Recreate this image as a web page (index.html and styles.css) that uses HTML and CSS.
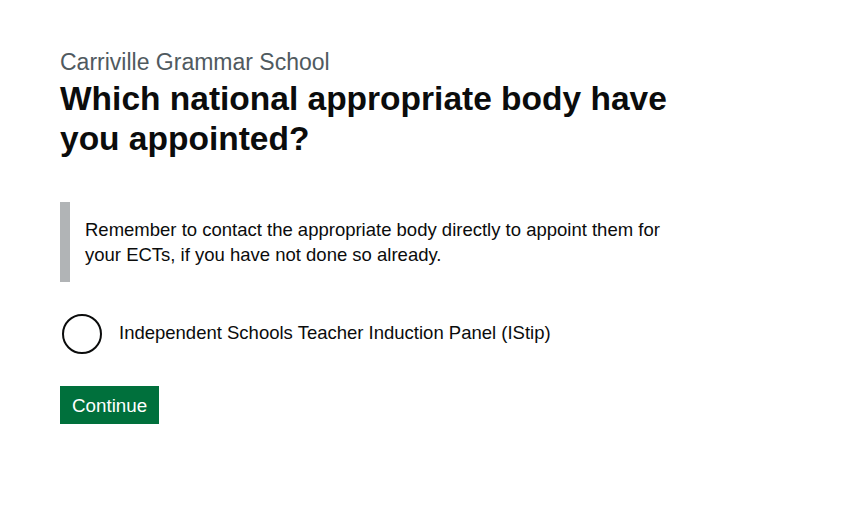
FILE: index.html
```html
<!DOCTYPE html>
<html lang="en">
<head>
<meta charset="utf-8">
<title>Which national appropriate body have you appointed?</title>
<link rel="stylesheet" href="styles.css">
</head>
<body>
<main class="main">
  <form class="form">
    <span class="caption">Carriville Grammar School</span>
    <h1 class="heading">Which national appropriate body have you appointed?</h1>
    <div class="inset">
      Remember to contact the appropriate body directly to appoint them for your ECTs, if you have not done so already.
    </div>
    <div class="radios">
      <label class="radio">
        <input class="radio-input" type="radio" name="ab">
        <span class="radio-circle"></span>
        <span class="radio-label">Independent Schools Teacher Induction Panel (IStip)</span>
      </label>
    </div>
    <button type="button" class="button">Continue</button>
  </form>
</main>
</body>
</html>
```

FILE: styles.css
```css
* { box-sizing: border-box; }
html, body { margin: 0; padding: 0; background: #fff; }
body {
  font-family: "Liberation Sans", Arial, sans-serif;
  color: #0b0c0c;
  -webkit-font-smoothing: antialiased;
}
.main { padding: 47px 60px 0; }
.form { max-width: 660px; }
.caption {
  display: block;
  font-size: 23px;
  line-height: 30px;
  color: #505a5f;
  margin-bottom: 2px;
}
.heading {
  margin: 0 0 43px;
  font-size: 33.5px;
  line-height: 40px;
  font-weight: 700;
  max-width: 640px;
}
.inset {
  margin: 0 0 30px;
  padding: 15px;
  border-left: 10px solid #b1b4b6;
  max-width: 640px;
  font-size: 18.5px;
  line-height: 25px;
}
.radios { margin-bottom: 30px; }
.radio {
  display: flex;
  align-items: flex-start;
  min-height: 44px;
  position: relative;
}
.radio-input { position: absolute; opacity: 0; width: 44px; height: 44px; margin: 0; }
.radio-circle {
  flex: none;
  width: 40px;
  height: 40px;
  margin: 2px;
  border: 2px solid #0b0c0c;
  border-radius: 50%;
}
.radio-label {
  padding: 8px 15px 5px;
  font-size: 18.5px;
  line-height: 25px;
}
.button {
  display: inline-block;
  font-family: inherit;
  font-size: 18.8px;
  line-height: 19px;
  padding: 8px 10px 7px;
  border: 2px solid transparent;
  border-radius: 0;
  color: #fff;
  background: #00703c;
  box-shadow: 0 2px 0 #002d18;
  cursor: pointer;
}
```
